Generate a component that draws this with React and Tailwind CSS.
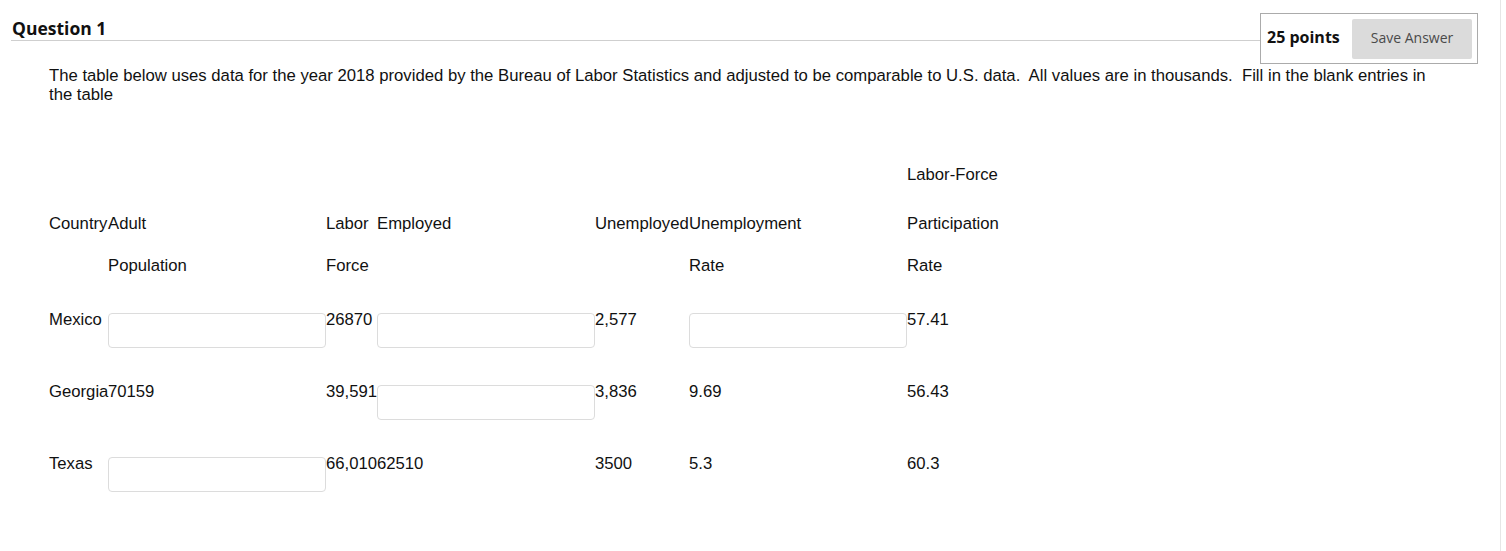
import React from "react";

const arial = { fontFamily: '"Liberation Sans", Arial, sans-serif' };

function Field() {
  return (
    <div className="mt-[3px] h-[35px] w-[218px] rounded-[4px] border border-[#dcdcdc] bg-white" />
  );
}

function Cell({ children }) {
  return <div className="whitespace-nowrap">{children}</div>;
}

export default function App() {
  const rowH = ["h-[49px]", "h-[42px]", "h-[54px]", "h-[72px]", "h-[72px]", "h-[60px]"];
  const rows = [
    ["", "", "", "", "", "", "Labor-Force"],
    ["Country", "Adult", "Labor", "Employed", "Unemployed", "Unemployment", "Participation"],
    ["", "Population", "Force", "", "", "Rate", "Rate"],
    ["Mexico", null, "26870", null, "2,577", null, "57.41"],
    ["Georgia", "70159", "39,591", null, "3,836", "9.69", "56.43"],
    ["Texas", null, "66,010", "62510", "3500", "5.3", "60.3"],
  ];
  return (
    <div className="h-[551px] w-[1506px] overflow-hidden bg-white">
      <div className="h-[551px] w-[1501px] border-r border-[#e6e6e6]">
        {/* header */}
        <div className="flex items-start pt-[13px]">
          <div className="ml-[11px] h-[28px] flex-1 border-b border-[#cfcfcf] pl-[1px] pt-[3px]">
            <h2
              className="text-[17.5px] font-bold leading-[24px] text-[#111]"
              style={{ fontFamily: '"Open Sans", sans-serif' }}
            >
              Question 1
            </h2>
          </div>
          <div
            className="mr-[22px] flex h-[51px] w-[218px] items-start border border-[#ababab] pb-[4px] pl-[6px] pr-[5px] pt-[5px]"
            style={{ fontFamily: '"Open Sans", sans-serif' }}
          >
            <span className="flex h-[40px] items-center pb-[4px] text-[16px] font-bold text-[#111]">25 points</span>
            <button className="ml-auto h-[40px] w-[120px] rounded-[2px] bg-[#dbdbdb] pb-[4px] text-[14px] text-[#4a4a4a]">
              Save Answer
            </button>
          </div>
        </div>

        {/* body */}
        <div className="pl-[49px] text-[16.7px] text-[#111]" style={arial}>
          <p className="mt-[2px] w-[1385px] leading-[19px]">
            The table below uses data for the year 2018 provided by the Bureau of Labor Statistics and adjusted to be comparable to U.S. data.&nbsp; All values are in thousands.&nbsp; Fill in the blank entries in the table
          </p>

          <div className="mt-[61px] grid grid-cols-[59px_218px_51px_218px_94px_218px_200px] leading-[19px]">
            {rows.map((r, i) =>
              r.map((c, j) => (
                <div key={i + "-" + j} className={rowH[i]}>
                  {c === null ? <Field /> : <Cell>{c}</Cell>}
                </div>
              ))
            )}
          </div>
        </div>
      </div>
    </div>
  );
}
